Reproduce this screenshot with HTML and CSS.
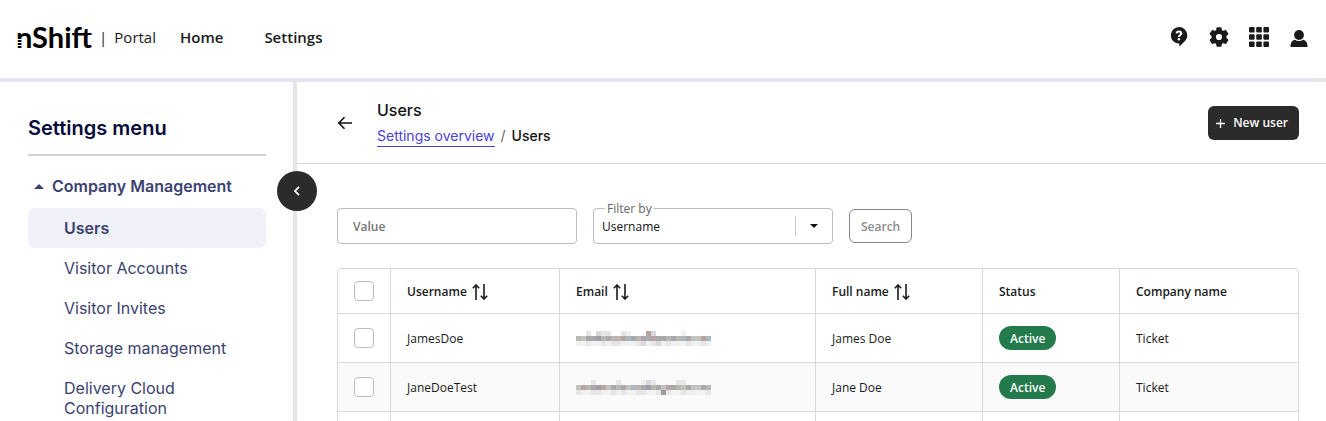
FILE: index.html
```html
<!DOCTYPE html>
<html lang="en">
<head>
<meta charset="utf-8">
<title>nShift Portal – Users</title>
<link rel="stylesheet" href="styles.css">
</head>
<body>
<div class="app">
  <header class="topbar">
    <a class="brand" href="#"><span class="brand-name">nShift</span><span class="brand-bar">|</span><span class="brand-product">Portal</span></a>
    <nav class="topnav">
      <a href="#">Home</a>
      <a href="#">Settings</a>
    </nav>
    <div class="tools">
      <button class="tool" aria-label="Help">
        <svg width="20" height="20" viewBox="0 0 20 20"><path fill="#1a1a1a" d="M10 0a8.3 8.3 0 0 1 8.300 8.300c0 3-1.200 4.800-3.300 6.700L10.500 19.500 10.200 16.600A8.300 8.300 0 1 1 10 0z"/><path fill="none" stroke="#fff" stroke-width="2" d="M7.700 6.400c.1-2.600 4.500-2.500 4.500.1 0 1.600-2.300 1.600-2.300 3.500"/><circle cx="9.900" cy="12.200" r="1.200" fill="#fff"/></svg>
      </button>
      <button class="tool" aria-label="Configuration">
        <svg width="20" height="20" viewBox="0 0 20 20"><path fill="#1a1a1a" stroke="#1a1a1a" stroke-width="1.500" stroke-linejoin="round" d="M8.300 1h3.400l.6 2.600 1.800 1 2.600-.8 1.900 3.100-1.900 1.900v2.400l1.900 1.900-1.900 3.100-2.600-.8-1.800 1-.6 2.600H8.300l-.6-2.600-1.800-1-2.600.8-1.900-3.100 1.900-1.900V8.800L1.400 6.900l1.900-3.100 2.600.8 1.800-1z"/><circle cx="10" cy="10" r="3.100" fill="#fff"/></svg>
      </button>
      <button class="tool" aria-label="Apps">
        <svg width="20" height="20" viewBox="0 0 20 20" fill="#1a1a1a"><rect width="5.600" height="5.600" rx="1"/><rect x="7.200" width="5.600" height="5.600" rx="1"/><rect x="14.400" width="5.600" height="5.600" rx="1"/><rect y="7.200" width="5.600" height="5.600" rx="1"/><rect x="7.200" y="7.200" width="5.600" height="5.600" rx="1"/><rect x="14.400" y="7.200" width="5.600" height="5.600" rx="1"/><rect y="14.400" width="5.600" height="5.600" rx="1"/><rect x="7.200" y="14.400" width="5.600" height="5.600" rx="1"/><rect x="14.400" y="14.400" width="5.600" height="5.600" rx="1"/></svg>
      </button>
      <button class="tool" aria-label="Account">
        <svg width="20" height="20" viewBox="0 0 20 20" fill="#1a1a1a"><circle cx="10" cy="8" r="4.900"/><path d="M1.500 19.300c0-3.800 1.700-6.200 4.300-6.600 2.600 1.800 5.800 1.800 8.400 0 2.600.4 4.300 2.800 4.300 6.600q0 1.200-1.200 1.200H2.700q-1.200 0-1.200-1.200z"/></svg>
      </button>
    </div>
  </header>

  <div class="body">
    <aside class="sidebar">
      <h2 class="side-title">Settings menu</h2>
      <nav class="side-nav">
        <button class="side-group"><svg width="10" height="5" viewBox="0 0 10 5"><path fill="#3b4270" d="M5 0l5 5H0z"/></svg>Company Management</button>
        <a class="side-link active" href="#">Users</a>
        <a class="side-link" href="#">Visitor Accounts</a>
        <a class="side-link" href="#">Visitor Invites</a>
        <a class="side-link" href="#">Storage management</a>
        <a class="side-link" href="#">Delivery Cloud Configuration</a>
      </nav>
      <button class="collapse" aria-label="Collapse menu"><svg width="10" height="10" viewBox="0 0 10 10"><path fill="none" stroke="#fff" stroke-width="1.800" d="M7 .8L3 5l4 4.200"/></svg></button>
    </aside>

    <main class="main">
      <div class="page-head">
        <button class="back" aria-label="Back"><svg width="16" height="14" viewBox="0 0 16 14"><path fill="none" stroke="#111" stroke-width="1.600" d="M15 7H2M7.500 1.200L1.800 7l5.700 5.800"/></svg></button>
        <div class="page-title">
          <h1>Users</h1>
          <div class="crumbs"><a href="#">Settings overview</a><span class="slash">/</span><span>Users</span></div>
        </div>
        <button class="new-user"><svg width="9" height="9" viewBox="0 0 9 9"><path stroke="#fff" stroke-width="1.300" d="M4.500 0v9M0 4.500h9"/></svg>New user</button>
      </div>

      <div class="content">
        <form class="filters">
          <input class="field value" type="text" placeholder="Value" aria-label="Value">
          <div class="filter-by">
            <label for="filter">Filter by</label>
            <select class="field" id="filter"><option>Username</option><option>Email</option></select>
            <svg class="caret" width="23" height="20" viewBox="0 0 23 20"><path stroke="#c4c4c4" d="M.5 0v20"/><path fill="#111" d="M15 8h8l-4 4z"/></svg>
          </div>
          <button class="search" type="button">Search</button>
        </form>

        <table class="users">
          <colgroup><col class="c-check"><col class="c-user"><col class="c-email"><col class="c-name"><col class="c-status"><col></colgroup>
          <thead>
            <tr>
              <th class="box"><input type="checkbox" aria-label="Select all"></th>
              <th><button class="sort">Username <svg width="16" height="16" viewBox="0 0 16 16"><path d="M4 16V1M.8 4.200L4 1l3.200 3.200M12 0v15M8.800 11.800L12 15l3.200-3.200"/></svg></button></th>
              <th><button class="sort">Email <svg width="16" height="16" viewBox="0 0 16 16"><path d="M4 16V1M.8 4.200L4 1l3.200 3.200M12 0v15M8.800 11.800L12 15l3.200-3.200"/></svg></button></th>
              <th><button class="sort">Full name <svg width="16" height="16" viewBox="0 0 16 16"><path d="M4 16V1M.8 4.200L4 1l3.200 3.200M12 0v15M8.800 11.800L12 15l3.200-3.200"/></svg></button></th>
              <th>Status</th>
              <th>Company name</th>
            </tr>
          </thead>
          <tbody>
            <tr>
              <td class="box"><input type="checkbox" aria-label="Select JamesDoe"></td>
              <td>JamesDoe</td>
              <td><svg class="masked" width="135" height="15" data-row="0"></svg></td>
              <td>James Doe</td>
              <td class="box"><span class="badge">Active</span></td>
              <td>Ticket</td>
            </tr>
            <tr>
              <td class="box"><input type="checkbox" aria-label="Select JaneDoeTest"></td>
              <td>JaneDoeTest</td>
              <td><svg class="masked" width="135" height="15" data-row="1"></svg></td>
              <td>Jane Doe</td>
              <td class="box"><span class="badge">Active</span></td>
              <td>Ticket</td>
            </tr>
            <tr><td></td><td></td><td></td><td></td><td></td><td></td></tr>
          </tbody>
        </table>
      </div>
    </main>
  </div>
</div>
<script src="mask.js"></script>
</body>
</html>
```
FILE: mask.js
```js
// Each masked address is three lines of 5px blocks; a dot leaves the block empty.
const shades = {
  a: '#b9b7b0', b: '#a9a9ac', c: '#a29ca6', d: '#c5c3c0', e: '#a8b8c4',
  f: '#b6a5a2', g: '#d9d9dc', h: '#e6e6e9', i: '#f1f1f1', j: '#f5eeec',
  k: '#ecf1f3', l: '#9b9da3'
};
const masks = [
  ['..h.ghh..hk...fg.....k.....',
   'adbbcabaafebabbfbbabaebddfe.',
   'iihikhihhiikhgjhgihkiihiihi.'],
  ['...h....h....kgh....hh.....',
   'dfabcfdbabdeabcabdfbadbddba.',
   'hjihhiihkhiihhiihlhiihkiiihk']
];
document.querySelectorAll('.masked').forEach(svg => {
  masks[svg.dataset.row].forEach((line, y) => {
    [...line].forEach((key, x) => {
      if (!shades[key]) return;
      const block = document.createElementNS('http://www.w3.org/2000/svg', 'rect');
      block.setAttribute('x', x * 5);
      block.setAttribute('y', y * 5);
      block.setAttribute('width', 5);
      block.setAttribute('height', 5);
      block.setAttribute('fill', shades[key]);
      svg.appendChild(block);
    });
  });
});
```
FILE: styles.css
```css
* { box-sizing: border-box; }
body {
  margin: 0;
  background: #fff;
  color: #1a1a1a;
  font: 12px/16px "Open Sans", "Noto Sans", sans-serif;
}
button, input, select { font: inherit; color: inherit; }
button { border: 0; background: none; padding: 0; cursor: pointer; }
a { color: inherit; text-decoration: none; }
svg { display: block; flex: none; }

.app { display: flex; flex-direction: column; height: 100vh; overflow: hidden; }

.topbar {
  display: flex;
  align-items: center;
  flex: none;
  height: 82px;
  padding: 0 17px 4px 16px;
  border-bottom: 4px solid #e4e4eb;
  font-size: 15px;
  line-height: 20px;
}
.brand { display: flex; align-items: center; }
.brand-name {
  position: relative;
  font: 700 29px/28px Lato, sans-serif;
  color: #000;
}
.brand-name::before,
.brand-name::after {
  content: "";
  position: absolute;
  background: repeating-linear-gradient(#fff 0 1px, transparent 1px 3px);
}
.brand-name::before { left: 0; bottom: 4px; width: 6px; height: 8px; }
.brand-name::after { right: 0; top: 9px; width: 4px; height: 4px; }
.brand-bar { margin: 0 7px; }
.brand-product { font-weight: 500; }
.topnav { display: flex; gap: 41px; margin-left: 24px; font-weight: 600; }
.tools { display: flex; gap: 20px; margin-left: auto; }

.body { display: flex; flex: 1; min-height: 0; }
.sidebar {
  position: relative;
  flex: none;
  width: 297px;
  padding: 32px 27px 0 28px;
  border-right: 4px solid #e4e4eb;
  font-family: Inter, sans-serif;
  font-size: 16px;
  line-height: 20px;
  color: #3b4270;
}
.side-title {
  margin: 0 0 12px;
  padding-bottom: 12px;
  border-bottom: 2px solid #d3d3de;
  font-size: 20px;
  line-height: 28px;
  font-weight: 600;
  color: #050b3c;
}
.side-nav { display: flex; flex-direction: column; }
.side-group {
  display: flex;
  align-items: center;
  gap: 8px;
  height: 36px;
  margin-bottom: 4px;
  padding-left: 6px;
  font-weight: 600;
}
.side-link { padding: 10px 36px; border-radius: 6px; }
.side-link.active { background: #f1f1fa; font-weight: 600; }
.collapse {
  position: absolute;
  top: 89px;
  right: -24px;
  display: grid;
  place-items: center;
  width: 40px;
  height: 40px;
  border-radius: 50%;
  background: #2b2b2b;
}

.main { flex: 1; min-width: 0; }
.page-head {
  display: flex;
  align-items: center;
  height: 82px;
  padding: 0 27px 0 40px;
  border-bottom: 1px solid #d9d9d9;
}
.page-title { margin-left: 24px; padding-top: 2px; font-family: Inter, sans-serif; color: #111; }
.page-title h1 { margin: 0 0 6px; font-size: 16px; line-height: 20px; font-weight: 500; }
.crumbs { display: flex; gap: 6px; font-size: 14px; line-height: 20px; font-weight: 500; }
.crumbs a { border-bottom: 1px solid #4a3fd6; color: #4a3fd6; font-weight: 400; }
.crumbs .slash { color: #666; font-weight: 400; }
.new-user {
  display: flex;
  align-items: center;
  gap: 8px;
  height: 34px;
  margin-left: auto;
  padding: 1px 11px 0 8px;
  border-radius: 6px;
  background: #2b2b2b;
  color: #fff;
  font-weight: 600;
}

.content { padding: 44px 27px 0 40px; }
.filters { display: flex; align-items: center; gap: 16px; margin-bottom: 24px; }
.field {
  display: block;
  width: 240px;
  height: 36px;
  border: 1px solid #bdbdbd;
  border-radius: 4px;
  background: #fff;
}
.value { padding: 1px 15px 0; font-weight: 600; }
.value::placeholder { color: #757575; opacity: 1; }
.filter-by { position: relative; }
.filter-by label {
  position: absolute;
  top: -7px;
  left: 12px;
  padding: 0 2px;
  background: #fff;
  color: #666;
}
.filter-by select { appearance: none; padding: 1px 8px 0; color: #111; }
.caret { position: absolute; top: 8px; right: 15px; pointer-events: none; }
.search {
  height: 34px;
  padding: 1px 11px 0;
  border: 1px solid #858585;
  border-radius: 6px;
  color: #8c8c8c;
  font-weight: 600;
}

.users {
  width: 100%;
  table-layout: fixed;
  border: 1px solid #d9d9d9;
  border-radius: 4px;
  border-spacing: 0;
}
.c-check { width: 53px; }
.c-user { width: 169px; }
.c-email { width: 256px; }
.c-name { width: 167px; }
.c-status { width: 137px; }
.users th, .users td {
  height: 49px;
  padding: 1px 16px 0;
  border-right: 1px solid #d9d9d9;
  border-bottom: 1px solid #d9d9d9;
  text-align: left;
}
.users th { height: 45px; font-weight: 600; }
.users .box { padding-top: 0; }
.users th:last-child, .users td:last-child { border-right: 0; }
.users tbody tr:nth-child(even) { background: #fafafa; }
.users input {
  display: block;
  appearance: none;
  width: 20px;
  height: 20px;
  margin: 0;
  border: 1px solid #bdbdbd;
  border-radius: 4px;
  background: #fff;
}
.sort { display: flex; align-items: center; gap: 5px; font-weight: 600; }
.sort path { fill: none; stroke: #1a1a1a; stroke-width: 1.6; }
.badge {
  display: inline-block;
  padding: 5px 11px 3px;
  border-radius: 12px;
  background: #237a4b;
  color: #fff;
  font-weight: 600;
}
```
